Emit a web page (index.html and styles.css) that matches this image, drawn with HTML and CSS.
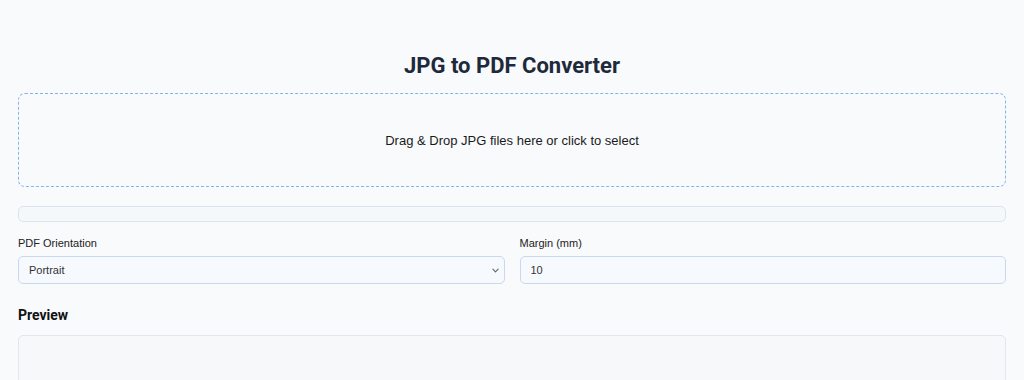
FILE: index.html
```html
<!DOCTYPE html>
<html lang="en">
<head>
<meta charset="utf-8">
<title>JPG to PDF Converter</title>
<link rel="stylesheet" href="styles.css">
</head>
<body>
<main class="app">
  <h1 class="title">JPG to PDF Converter</h1>
  <div class="dropzone">Drag &amp; Drop JPG files here or click to select</div>
  <div class="progress"><div class="progress-fill" style="width:0%"></div></div>
  <div class="options">
    <div class="field">
      <label class="label" for="orientation">PDF Orientation</label>
      <div class="select-wrap">
        <select id="orientation" class="control select">
          <option>Portrait</option>
          <option>Landscape</option>
        </select>
        <svg class="chevron" viewBox="0 0 8 5" width="7" height="5"><path d="M1 1l3 3 3-3" fill="none" stroke="#666" stroke-width="1.3" stroke-linecap="round" stroke-linejoin="round"/></svg>
      </div>
    </div>
    <div class="field">
      <label class="label" for="margin">Margin (mm)</label>
      <input id="margin" class="control" type="text" value="10">
    </div>
  </div>
  <h2 class="subtitle">Preview</h2>
  <div class="preview"></div>
</main>
</body>
</html>
```
FILE: styles.css
```css
* { box-sizing: border-box; }
html, body { margin: 0; padding: 0; }
body {
  background: #f8fafc;
  font-family: "Liberation Sans", Arial, sans-serif;
  color: #1f2937;
}
.app {
  padding: 50px 18px 0 18px;
}
.title {
  margin: 0 0 11px 0;
  font-family: Roboto, "Liberation Sans", sans-serif;
  font-weight: 700;
  font-size: 22px;
  line-height: 32px;
  text-align: center;
  color: #1e293b;
}
.dropzone {
  height: 94px;
  border: 1px dashed #85b2ef;
  border-radius: 7px;
  background: #f8fafc;
  display: flex;
  align-items: center;
  justify-content: center;
  font-size: 13px;
  color: #1a1a1a;
}
.progress {
  margin-top: 19px;
  height: 16px;
  border: 1px solid #dbe4ee;
  border-radius: 5px;
  background: #f5f8fb;
  overflow: hidden;
}
.progress-fill { height: 100%; background: #3b82f6; }
.options {
  margin-top: 14px;
  display: grid;
  grid-template-columns: 1fr 1fr;
  gap: 15px;
}
.field { display: flex; flex-direction: column; }
.label {
  font-size: 11px;
  line-height: 14px;
  color: #222;
  margin-bottom: 6px;
}
.control {
  height: 28px;
  width: 100%;
  border: 1px solid #c9d8ef;
  border-radius: 5px;
  background: #f6f9fd;
  padding: 0 10px;
  font-family: "Liberation Sans", Arial, sans-serif;
  font-size: 11px;
  color: #333;
  outline: none;
}
.select-wrap { position: relative; }
.select {
  appearance: none;
  -webkit-appearance: none;
}
.chevron {
  position: absolute;
  right: 6px;
  top: 12px;
  pointer-events: none;
}
.subtitle {
  margin: 22px 0 0 0;
  font-family: Roboto, "Liberation Sans", sans-serif;
  font-weight: 700;
  font-size: 14px;
  line-height: 18px;
  color: #111;
}
.preview {
  margin-top: 11px;
  height: 120px;
  border: 1px solid #e1e7ee;
  border-radius: 5px;
  background: #f6f8fa;
}
```
